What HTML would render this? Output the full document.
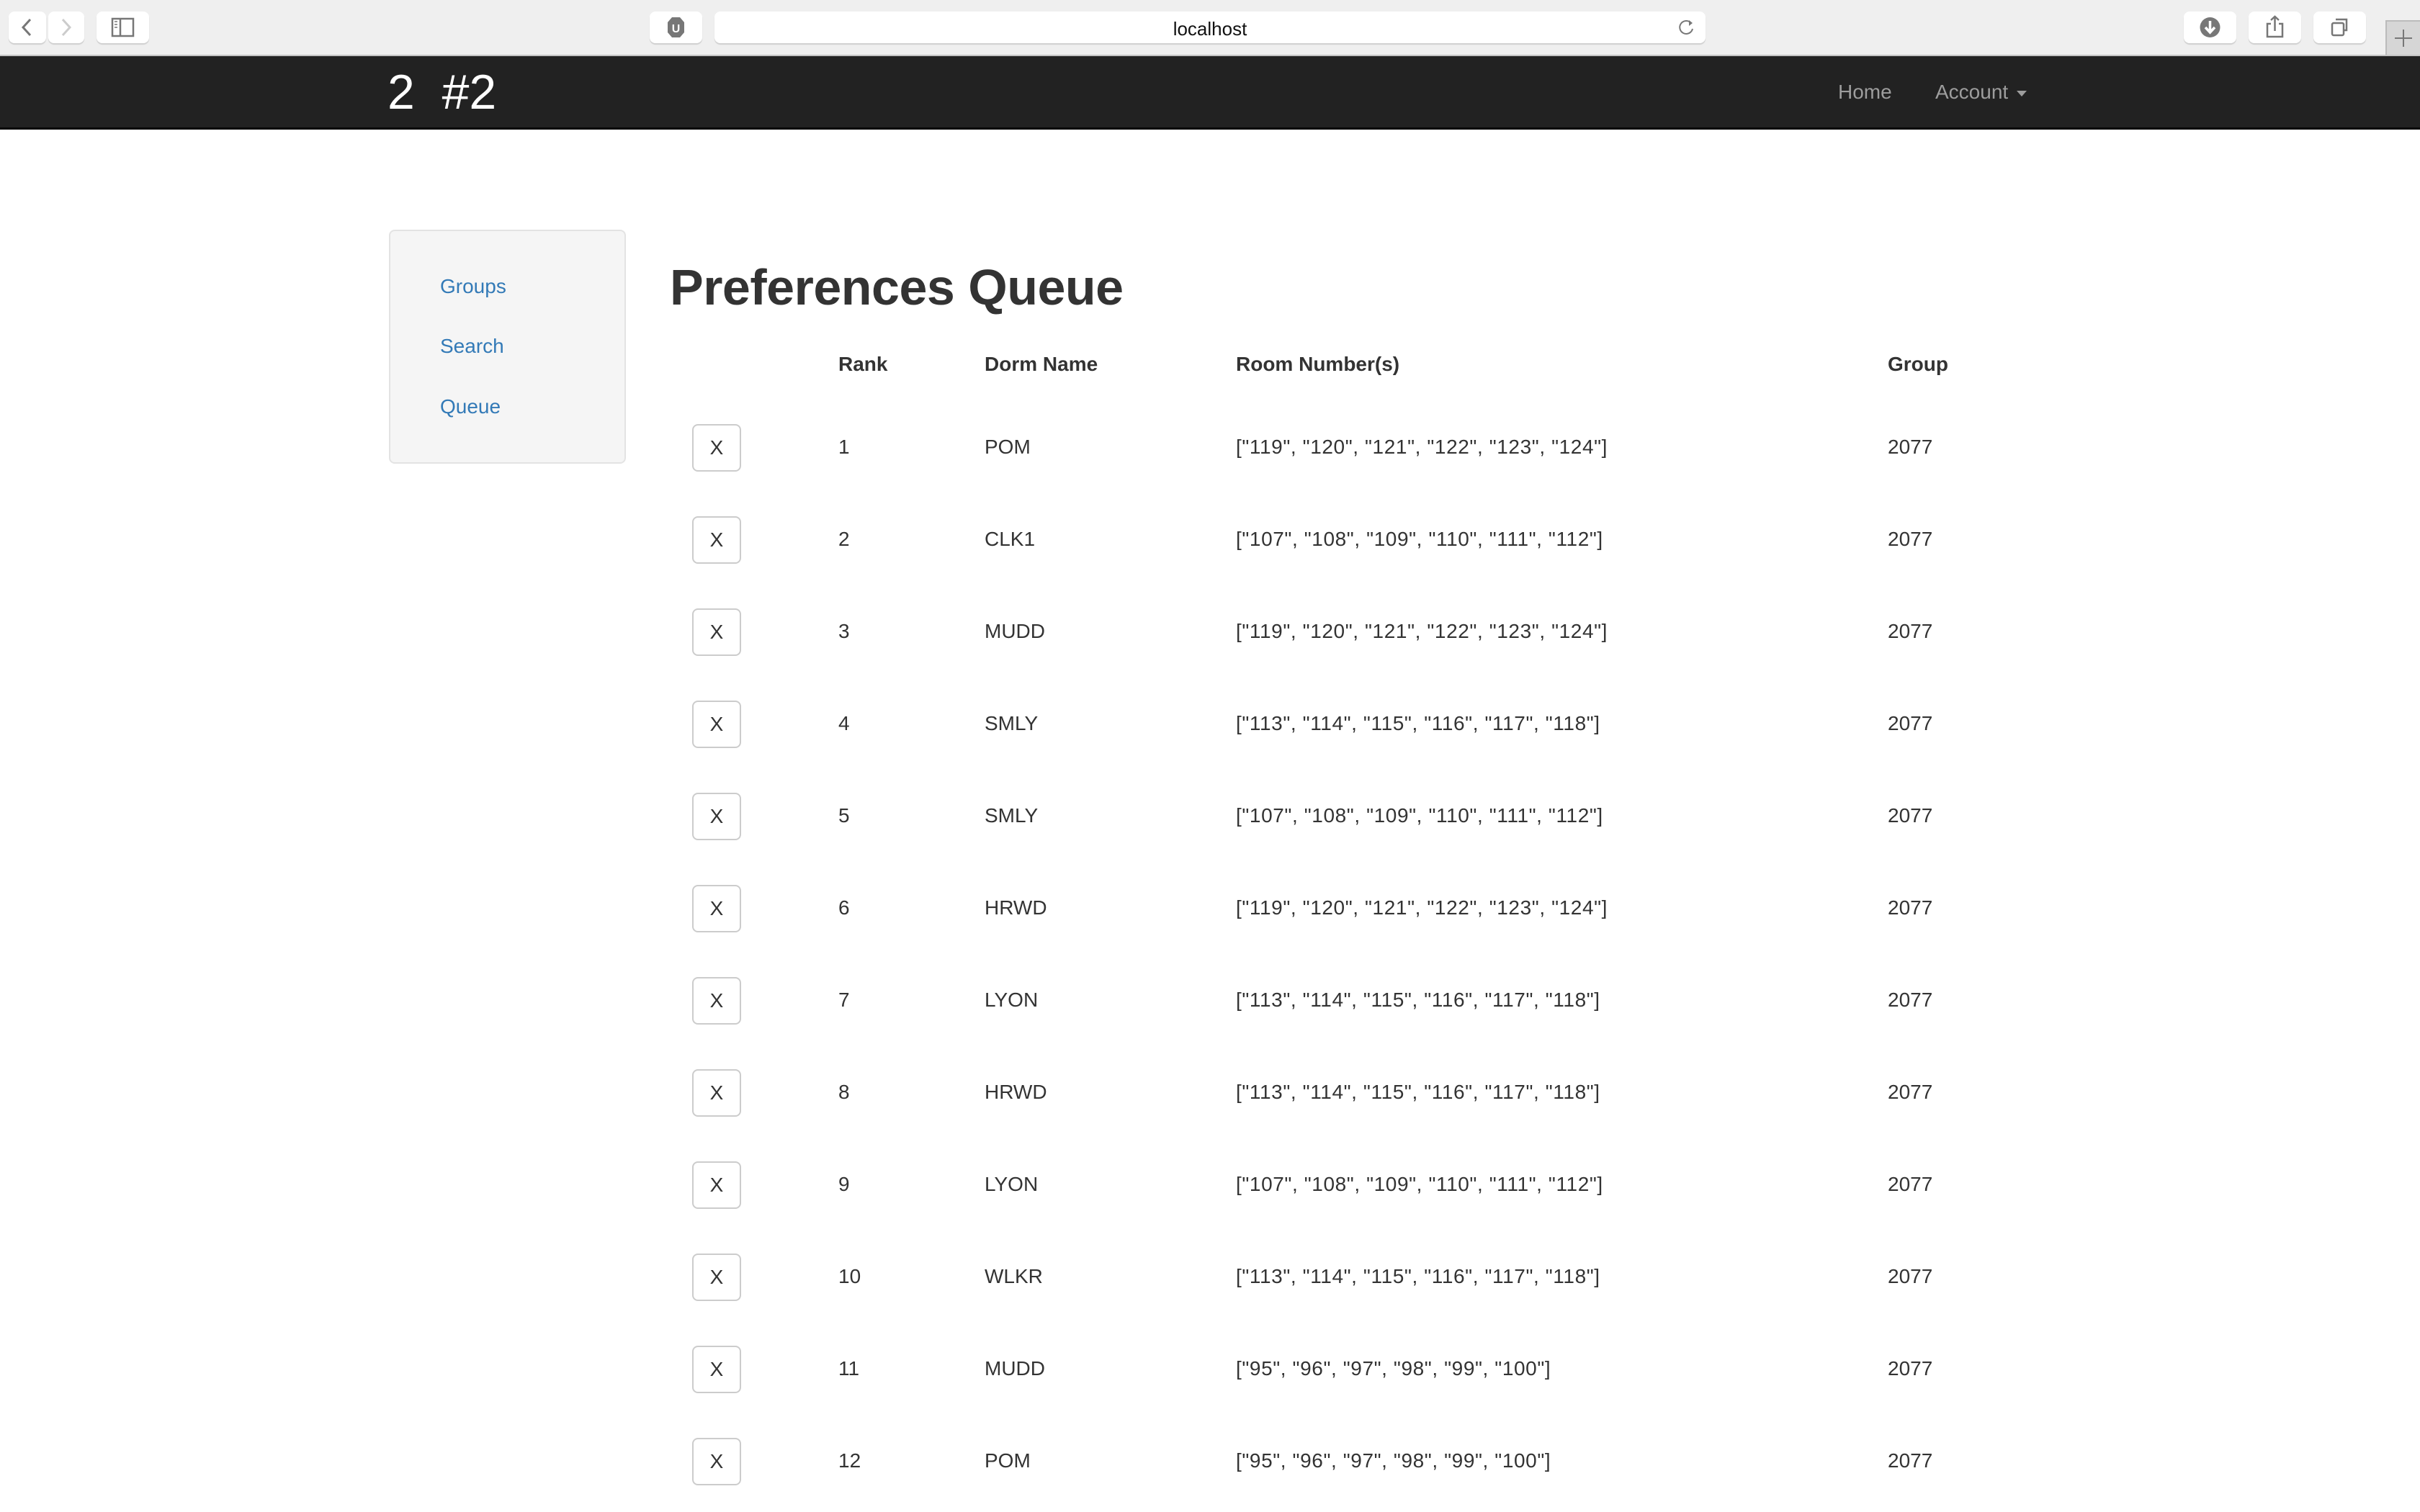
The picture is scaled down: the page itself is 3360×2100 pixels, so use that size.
<!DOCTYPE html>
<html><head><meta charset="utf-8"><style>
*{margin:0;padding:0;box-sizing:border-box}
html,body{width:3360px;height:2100px;overflow:hidden;background:#fff;font-family:"Liberation Sans",Arial,sans-serif;color:#333}
.a{position:absolute}
.tb{left:0;top:0;width:3360px;height:76px;background:#efefef}
.bt{background:#fff;border-radius:8px;box-shadow:0 2px 1px #cfcfcf;height:44px;top:16px}
.nav{left:0;top:76px;width:3360px;height:104px;background:#222;border-top:2px solid #c4c4c4;border-bottom:3px solid #080808}
.side{left:540px;top:319px;width:329px;height:325px;background:#f5f5f5;border:2px solid #e3e3e3;border-radius:8px}
.lk{color:#337ab7;font-size:28px;left:611px}
.t{font-size:28px;line-height:28px}
.r{letter-spacing:0.6px}
.th{font-weight:bold}
.x{left:961px;width:68px;height:66px;border:2px solid #ccc;border-radius:8px;font-size:28px;text-align:center;line-height:62px;color:#333}
</style></head><body>
<div class="a tb"></div>
<div class="a bt" style="left:12px;width:52px"><svg width="52" height="44"><path d="M30 11 L20 22 L30 33" stroke="#777" stroke-width="3" fill="none"/></svg></div>
<div class="a bt" style="left:67px;width:50px"><svg width="50" height="44"><path d="M20 11 L30 22 L20 33" stroke="#ccc" stroke-width="3" fill="none"/></svg></div>
<div class="a bt" style="left:134px;width:73px"><svg width="73" height="44"><rect x="22" y="10" width="29" height="24" stroke="#777" stroke-width="2.5" fill="none"/><line x1="33" y1="10" x2="33" y2="34" stroke="#777" stroke-width="2.5"/><path d="M25 14h4M25 18h4M25 22h4" stroke="#999" stroke-width="2"/></svg></div>
<div class="a bt" style="left:902px;width:73px"><svg width="73" height="44"><polygon points="31,8 42,8 48,15 48,29 42,36 31,36 25,29 25,15" fill="#777"/><text x="36.5" y="29" font-size="16" fill="#fff" text-anchor="middle" font-family="Liberation Sans" font-weight="bold">U</text></svg></div>
<div class="a bt" style="left:992px;width:1376px"><div class="a" style="left:0;width:1376px;top:9px;text-align:center;font-size:26px;color:#111">localhost</div><svg class="a" style="left:1336px;top:8px" width="30" height="30"><path d="M20 8 A9 9 0 1 0 22 16" stroke="#777" stroke-width="2" fill="none"/><path d="M17 4 L22 8 L17 12Z" fill="#777"/></svg></div>
<div class="a bt" style="left:3032px;width:73px"><svg width="73" height="44"><circle cx="36.5" cy="22" r="14" fill="#777"/><path d="M36.5 13v15M30 22l6.5 7 6.5-7" stroke="#fff" stroke-width="3.5" fill="none"/></svg></div>
<div class="a bt" style="left:3122px;width:73px"><svg width="73" height="44"><path d="M31 17h-5v18h21V17h-5" stroke="#777" stroke-width="2.5" fill="none"/><path d="M36.5 27V7M31 12l5.5-5 5.5 5" stroke="#777" stroke-width="2.5" fill="none"/></svg></div>
<div class="a bt" style="left:3212px;width:73px"><svg width="73" height="44"><rect x="26" y="16" width="16" height="17" rx="2" stroke="#777" stroke-width="2.5" fill="none"/><path d="M31 11h15v15h-4" stroke="#777" stroke-width="2.5" fill="none"/></svg></div>
<div class="a" style="left:3312px;top:28px;width:48px;height:48px;background:#d6d6d6;border-left:2px solid #bbb;border-top:2px solid #bbb"><svg width="46" height="46"><path d="M23 11v24M11 23h24" stroke="#777" stroke-width="2"/></svg></div>
<div class="a nav"></div>
<div class="a" style="left:538px;top:88px;font-size:68px;color:#fff;line-height:80px">2 &nbsp;#2</div>
<div class="a" style="left:2552px;top:112px;font-size:28px;color:#9d9d9d">Home</div>
<div class="a" style="left:2687px;top:112px;font-size:28px;color:#9d9d9d">Account <span style="display:inline-block;width:0;height:0;border-left:7px solid transparent;border-right:7px solid transparent;border-top:8px solid #9d9d9d;vertical-align:middle;margin-left:4px"></span></div>
<div class="a side"></div>
<div class="a lk" style="top:382px">Groups</div>
<div class="a lk" style="top:465px">Search</div>
<div class="a lk" style="top:549px">Queue</div>
<div class="a" style="left:930px;top:356px;font-size:70px;font-weight:bold;line-height:86px;letter-spacing:-0.5px">Preferences Queue</div>
<div class="a t th" style="left:1164px;top:492px">Rank</div>
<div class="a t th" style="left:1367px;top:492px">Dorm Name</div>
<div class="a t th" style="left:1716px;top:492px">Room Number(s)</div>
<div class="a t th" style="left:2621px;top:492px">Group</div>
<div id="rows"></div>
<script>
var d=[["POM",'["119", "120", "121", "122", "123", "124"]'],["CLK1",'["107", "108", "109", "110", "111", "112"]'],["MUDD",'["119", "120", "121", "122", "123", "124"]'],["SMLY",'["113", "114", "115", "116", "117", "118"]'],["SMLY",'["107", "108", "109", "110", "111", "112"]'],["HRWD",'["119", "120", "121", "122", "123", "124"]'],["LYON",'["113", "114", "115", "116", "117", "118"]'],["HRWD",'["113", "114", "115", "116", "117", "118"]'],["LYON",'["107", "108", "109", "110", "111", "112"]'],["WLKR",'["113", "114", "115", "116", "117", "118"]'],["MUDD",'["95", "96", "97", "98", "99", "100"]'],["POM",'["95", "96", "97", "98", "99", "100"]']];
var h="";for(var i=0;i<12;i++){var c=622+i*128;var t=c-15;
h+='<div class="a x" style="top:'+(c-33)+'px">X</div><div class="a t" style="left:1164px;top:'+t+'px">'+(i+1)+'</div><div class="a t" style="left:1367px;top:'+t+'px">'+d[i][0]+'</div><div class="a t r" style="left:1716px;top:'+t+'px">'+d[i][1].replace(/"/g,'&quot;')+'</div><div class="a t" style="left:2621px;top:'+t+'px">2077</div>';}
document.getElementById("rows").innerHTML=h;
</script>
</body></html>
